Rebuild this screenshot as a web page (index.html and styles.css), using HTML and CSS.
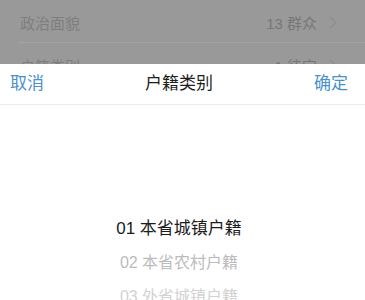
FILE: index.html
```html
<!DOCTYPE html>
<html lang="zh-CN">
<head>
<meta charset="utf-8">
<title>户籍类别</title>
<link rel="stylesheet" href="styles.css">
</head>
<body>
<div class="page">
  <div class="backdrop">
    <div class="row">
      <span class="label">政治面貌</span>
      <span class="value">13 群众<svg class="chev" width="8" height="13" viewBox="0 0 8 13"><polyline points="1,1 7,6.5 1,12" fill="none" stroke="#8d8d8d" stroke-width="1.2"/></svg></span>
    </div>
    <div class="row">
      <span class="label">户籍类别</span>
      <span class="value">1 待定<svg class="chev" width="8" height="13" viewBox="0 0 8 13"><polyline points="1,1 7,6.5 1,12" fill="none" stroke="#8d8d8d" stroke-width="1.2"/></svg></span>
    </div>
  </div>
  <div class="sheet">
    <div class="sheet-header">
      <span class="btn">取消</span>
      <span class="title">户籍类别</span>
      <span class="btn">确定</span>
    </div>
    <div class="picker">
      <div class="item selected">01 本省城镇户籍</div>
      <div class="item near">02 本省农村户籍</div>
      <div class="item far">03 外省城镇户籍</div>
    </div>
  </div>
</div>
</body>
</html>
```
FILE: styles.css
```css
html, body {
  margin: 0;
  padding: 0;
  background: #ffffff;
}
.page {
  width: 365px;
  height: 300px;
  overflow: hidden;
  font-family: "Liberation Sans", "Noto Sans CJK SC", sans-serif;
}
.backdrop {
  height: 64px;
  overflow: hidden;
  background: #999999;
}
.row {
  height: 43px;
  margin-left: 18px;
  padding-left: 2px;
  padding-right: 28px;
  border-bottom: 1px solid #a3a3a3;
  display: flex;
  align-items: center;
  justify-content: space-between;
  box-sizing: border-box;
  padding-top: 2px;
}
.label {
  font-size: 15px;
  color: #7e7e7e;
}
.value {
  font-size: 15px;
  color: #777777;
  display: flex;
  align-items: center;
}
.chev {
  margin-left: 12px;
  display: block;
}
.sheet {
  background: #ffffff;
}
.sheet-header {
  height: 41px;
  box-sizing: border-box;
  border-bottom: 1px solid #ebebeb;
  padding: 0 17px 0 10px;
  display: flex;
  align-items: center;
  justify-content: space-between;
}
.btn {
  font-size: 17px;
  color: #4a90c9;
  line-height: 20px;
}
.title {
  font-size: 17px;
  color: #1e1e1e;
  line-height: 20px;
}
.picker {
  padding: 107px 17px 0 10px;
  display: flex;
  flex-direction: column;
  align-items: center;
}
.item {
  height: 34px;
  line-height: 34px;
  white-space: nowrap;
}
.selected {
  font-size: 17px;
  color: #1c1c1c;
}
.near {
  font-size: 16px;
  color: #bcbcbc;
}
.far {
  font-size: 16px;
  color: #d2d2d2;
}
```
